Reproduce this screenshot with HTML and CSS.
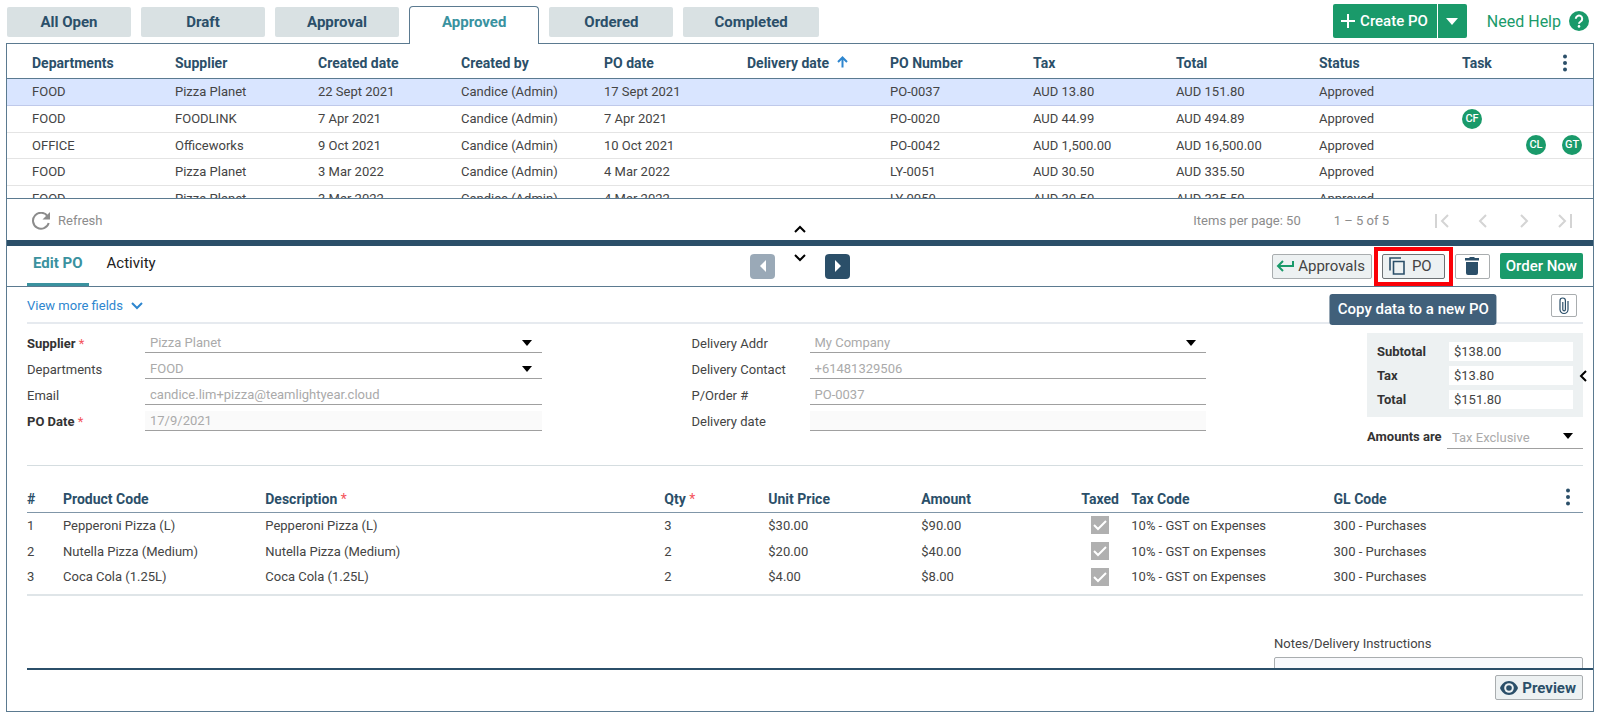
FILE: index.html
```html
<!DOCTYPE html>
<html lang="en">
<head>
    <meta charset="UTF-8">
    <meta name="viewport" content="width=device-width, initial-scale=1.0">
    <title>Purchase Orders</title>
    <link rel="stylesheet" href="styles.css">
</head>
<body>

    <!-- Top tabs and actions -->
    <header class="topbar">
        <nav class="tabs">
            <button type="button" class="tab">All Open</button>
            <button type="button" class="tab">Draft</button>
            <button type="button" class="tab">Approval</button>
            <button type="button" class="tab active">Approved</button>
            <button type="button" class="tab">Ordered</button>
            <button type="button" class="tab">Completed</button>
        </nav>
        <div class="top-actions">
            <div class="create-group">
                <button type="button" class="create">
                    <svg width="16" height="16" viewBox="0 0 16 16"><path d="M8 1v14M1 8h14" stroke="#fff" stroke-width="2" fill="none"/></svg>
                    Create PO
                </button>
                <button type="button" class="create-more" aria-label="More create options">
                    <svg width="12" height="7" viewBox="0 0 12 7"><path d="M0 0h12L6 7z" fill="#fff"/></svg>
                </button>
            </div>
            <a href="#" class="help">
                Need Help
                <svg width="20" height="20" viewBox="0 0 20 20"><circle cx="10" cy="10" r="10" fill="#1a9a6a"/><path d="M6.8 7.8a3.2 3.2 0 1 1 4.9 2.7C10.600 11.200 10 11.600 10 12.700" stroke="#fff" stroke-width="2" fill="none"/><circle cx="10" cy="15.400" r="1.300" fill="#fff"/></svg>
            </a>
        </div>
    </header>

    <main class="panel">

        <!-- Orders list -->
        <div class="orders-scroll">
            <table class="orders">
                <colgroup>
                    <col class="col-first"><col><col><col><col><col>
                    <col><col><col><col><col class="col-task">
                </colgroup>
                <thead>
                    <tr>
                        <th>Departments</th>
                        <th>Supplier</th>
                        <th>Created date</th>
                        <th>Created by</th>
                        <th>PO date</th>
                        <th>Delivery date <svg class="sort" width="11" height="12" viewBox="0 0 11 12"><path d="M5.500 11.500V1.500M1 6l4.500-4.500L10 6" stroke="#2e86cf" stroke-width="2" fill="none"/></svg></th>
                        <th>PO Number</th>
                        <th>Tax</th>
                        <th>Total</th>
                        <th>Status</th>
                        <th>
                            <div class="task-head">
                                Task
                                <button type="button" class="dots" aria-label="Columns"><svg width="4" height="18" viewBox="0 0 4 18"><circle cx="2" cy="2.500" r="2"/><circle cx="2" cy="9" r="2"/><circle cx="2" cy="15.500" r="2"/></svg></button>
                            </div>
                        </th>
                    </tr>
                </thead>
                <tbody>
                    <tr class="selected">
                        <td>FOOD</td><td>Pizza Planet</td><td>22 Sept 2021</td><td>Candice (Admin)</td><td>17 Sept 2021</td><td></td>
                        <td>PO-0037</td><td>AUD 13.80</td><td>AUD 151.80</td><td>Approved</td><td></td>
                    </tr>
                    <tr>
                        <td>FOOD</td><td>FOODLINK</td><td>7 Apr 2021</td><td>Candice (Admin)</td><td>7 Apr 2021</td><td></td>
                        <td>PO-0020</td><td>AUD 44.99</td><td>AUD 494.89</td><td>Approved</td>
                        <td><div class="badges"><span class="badge">CF</span></div></td>
                    </tr>
                    <tr>
                        <td>OFFICE</td><td>Officeworks</td><td>9 Oct 2021</td><td>Candice (Admin)</td><td>10 Oct 2021</td><td></td>
                        <td>PO-0042</td><td>AUD 1,500.00</td><td>AUD 16,500.00</td><td>Approved</td>
                        <td><div class="badges end"><span class="badge">CL</span><span class="badge">GT</span></div></td>
                    </tr>
                    <tr>
                        <td>FOOD</td><td>Pizza Planet</td><td>3 Mar 2022</td><td>Candice (Admin)</td><td>4 Mar 2022</td><td></td>
                        <td>LY-0051</td><td>AUD 30.50</td><td>AUD 335.50</td><td>Approved</td><td></td>
                    </tr>
                    <tr>
                        <td>FOOD</td><td>Pizza Planet</td><td>3 Mar 2022</td><td>Candice (Admin)</td><td>4 Mar 2022</td><td></td>
                        <td>LY-0050</td><td>AUD 30.50</td><td>AUD 335.50</td><td>Approved</td><td></td>
                    </tr>
                </tbody>
            </table>
        </div>

        <!-- Paginator -->
        <div class="pager">
            <button type="button" class="refresh">
                <svg width="18" height="18" viewBox="0 0 18 18"><path d="M15.600 4.200A8 8 0 1 0 16.700 11" stroke="#8c8c8c" stroke-width="2" fill="none"/><path d="M18 0v7.500h-7.500z" fill="#8c8c8c"/></svg>
                Refresh
            </button>
            <button type="button" class="collapse" aria-label="Collapse list">
                <svg width="12" height="8" viewBox="0 0 12 8"><path d="M1 7l5-5 5 5" stroke="#000" stroke-width="2" fill="none"/></svg>
            </button>
            <div class="pager-right">
                <span>Items per page: 50</span>
                <span>1 – 5 of 5</span>
                <div class="pager-buttons">
                    <button type="button" disabled aria-label="First page"><svg width="16" height="14" viewBox="0 0 16 14"><path d="M2 0v14M14 1L8 7l6 6"/></svg></button>
                    <button type="button" disabled aria-label="Previous page"><svg width="16" height="14" viewBox="0 0 16 14"><path d="M11 1L5 7l6 6"/></svg></button>
                    <button type="button" disabled aria-label="Next page"><svg width="16" height="14" viewBox="0 0 16 14"><path d="M5 1l6 6-6 6"/></svg></button>
                    <button type="button" disabled aria-label="Last page"><svg width="16" height="14" viewBox="0 0 16 14"><path d="M14 0v14M2 1l6 6-6 6"/></svg></button>
                </div>
            </div>
        </div>

        <!-- Order detail header -->
        <div class="detail-head">
            <nav class="detail-tabs">
                <button type="button" class="detail-tab active">Edit PO</button>
                <button type="button" class="detail-tab">Activity</button>
            </nav>
            <div class="stepper">
                <button type="button" class="step" disabled aria-label="Previous order"><svg width="6" height="12" viewBox="0 0 6 12"><path d="M6 0v12L0 6z" fill="#fff"/></svg></button>
                <button type="button" class="expand" aria-label="Expand list"><svg width="12" height="8" viewBox="0 0 12 8"><path d="M1 1l5 5 5-5" stroke="#000" stroke-width="2" fill="none"/></svg></button>
                <button type="button" class="step" aria-label="Next order"><svg width="6" height="12" viewBox="0 0 6 12"><path d="M0 0v12l6-6z" fill="#fff"/></svg></button>
            </div>
            <div class="detail-actions">
                <button type="button" class="btn">
                    <svg width="18" height="12" viewBox="0 0 18 12"><path d="M17 1v5H2M7 1L2 6l5 5" stroke="#1a9a6a" stroke-width="2" fill="none"/></svg>
                    Approvals
                </button>
                <span class="copy-wrap">
                    <button type="button" class="btn copy" aria-describedby="copy-tip">
                        <svg width="16" height="18" viewBox="0 0 16 18"><path d="M1 13.500V1h11M4.500 4.500H15V17H4.500z" stroke="#2b4f69" stroke-width="1.600" fill="none"/></svg>
                        PO
                    </button>
                    <span class="tooltip" id="copy-tip" role="tooltip">Copy data to a new PO</span>
                </span>
                <button type="button" class="btn trash" aria-label="Delete">
                    <svg width="14" height="18" viewBox="0 0 14 18"><path d="M1 5h12v11a2 2 0 0 1-2 2H3a2 2 0 0 1-2-2zM0 1h4l1-1h4l1 1h4v2.500H0z" fill="#2b4f69"/></svg>
                </button>
                <button type="button" class="order">Order Now</button>
            </div>
        </div>

        <!-- Order detail -->
        <div class="detail">
            <div class="more-row">
                <a href="#" class="more">
                    View more fields
                    <svg width="12" height="8" viewBox="0 0 12 8"><path d="M1 1l5 5 5-5" stroke="#2e86cf" stroke-width="2" fill="none"/></svg>
                </a>
                <button type="button" class="attach" aria-label="Attachments">
                    <svg width="10" height="18" viewBox="0 0 10 18"><path d="M9 4v8.500a4 4 0 0 1-8 0V3.700a2.700 2.700 0 0 1 5.400 0v8.800a1.300 1.300 0 0 1-2.600 0V5" stroke="#2b4f69" stroke-width="1.200" fill="none"/></svg>
                </button>
            </div>

            <form class="form">
                <div class="fields">
                    <label for="supplier" class="strong">Supplier <i>*</i></label>
                    <div class="select"><select id="supplier" disabled><option>Pizza Planet</option></select></div>
                    <label for="departments">Departments</label>
                    <div class="select"><select id="departments" disabled><option>FOOD</option></select></div>
                    <label for="email">Email</label>
                    <input type="text" id="email" value="candice.lim+pizza@teamlightyear.cloud" disabled>
                    <label for="podate" class="strong">PO Date <i>*</i></label>
                    <input type="text" id="podate" class="shaded" value="17/9/2021" disabled>
                </div>
                <div class="fields">
                    <label for="addr">Delivery Addr</label>
                    <div class="select"><select id="addr" disabled><option>My Company</option></select></div>
                    <label for="contact">Delivery Contact</label>
                    <input type="text" id="contact" value="+61481329506" disabled>
                    <label for="porder">P/Order #</label>
                    <input type="text" id="porder" value="PO-0037" disabled>
                    <label for="delivery">Delivery date</label>
                    <input type="text" id="delivery" class="shaded" value="" disabled>
                </div>
                <div class="totals">
                    <div class="totals-box">
                        <label for="subtotal">Subtotal</label>
                        <input type="text" id="subtotal" value="$138.00" readonly>
                        <label for="tax">Tax</label>
                        <input type="text" id="tax" value="$13.80" readonly>
                        <label for="total">Total</label>
                        <input type="text" id="total" value="$151.80" readonly>
                        <button type="button" class="side-toggle" aria-label="Show side panel"><svg width="8" height="12" viewBox="0 0 8 12"><path d="M7 1L2 6l5 5" stroke="#000" stroke-width="2" fill="none"/></svg></button>
                    </div>
                    <div class="amounts">
                        <label for="amounts">Amounts are</label>
                        <div class="select"><select id="amounts" disabled><option>Tax Exclusive</option></select></div>
                    </div>
                </div>
            </form>

            <table class="lines">
                <colgroup>
                    <col class="l-num"><col class="l-code"><col class="l-desc"><col class="l-qty"><col class="l-price">
                    <col class="l-amount"><col class="l-taxed"><col class="l-taxcode"><col>
                </colgroup>
                <thead>
                    <tr>
                        <th>#</th>
                        <th>Product Code</th>
                        <th>Description <i>*</i></th>
                        <th>Qty <i>*</i></th>
                        <th>Unit Price</th>
                        <th>Amount</th>
                        <th>Taxed</th>
                        <th>Tax Code</th>
                        <th>
                            <div class="gl-head">
                                GL Code
                                <button type="button" class="dots" aria-label="Line columns"><svg width="4" height="18" viewBox="0 0 4 18"><circle cx="2" cy="2.500" r="2"/><circle cx="2" cy="9" r="2"/><circle cx="2" cy="15.500" r="2"/></svg></button>
                            </div>
                        </th>
                    </tr>
                </thead>
                <tbody>
                    <tr>
                        <td>1</td><td>Pepperoni Pizza (L)</td><td>Pepperoni Pizza (L)</td><td>3</td><td>$30.00</td><td>$90.00</td>
                        <td><label class="check"><input type="checkbox" checked disabled aria-label="Taxed, line 1"><svg viewBox="0 0 18 18"><path d="M3 9l4 4 8-8"/></svg></label></td>
                        <td>10% - GST on Expenses</td><td>300 - Purchases</td>
                    </tr>
                    <tr>
                        <td>2</td><td>Nutella Pizza (Medium)</td><td>Nutella Pizza (Medium)</td><td>2</td><td>$20.00</td><td>$40.00</td>
                        <td><label class="check"><input type="checkbox" checked disabled aria-label="Taxed, line 2"><svg viewBox="0 0 18 18"><path d="M3 9l4 4 8-8"/></svg></label></td>
                        <td>10% - GST on Expenses</td><td>300 - Purchases</td>
                    </tr>
                    <tr>
                        <td>3</td><td>Coca Cola (1.25L)</td><td>Coca Cola (1.25L)</td><td>2</td><td>$4.00</td><td>$8.00</td>
                        <td><label class="check"><input type="checkbox" checked disabled aria-label="Taxed, line 3"><svg viewBox="0 0 18 18"><path d="M3 9l4 4 8-8"/></svg></label></td>
                        <td>10% - GST on Expenses</td><td>300 - Purchases</td>
                    </tr>
                </tbody>
            </table>

            <div class="notes">
                <label for="notes">Notes/Delivery Instructions</label>
                <textarea id="notes"></textarea>
            </div>
        </div>

        <!-- Bottom bar -->
        <footer class="bottom">
            <button type="button" class="btn preview">
                <svg width="18" height="14" viewBox="0 0 18 14"><path d="M9 0C5 0 1.500 2.800 0 7c1.500 4.200 5 7 9 7s7.500-2.800 9-7c-1.500-4.200-5-7-9-7z" fill="#2b4f69"/><circle cx="9" cy="7" r="4.800" fill="#edf1f2"/><circle cx="9" cy="7" r="2.800" fill="#2b4f69"/></svg>
                Preview
            </button>
        </footer>
    </main>

</body>
</html>
```

FILE: styles.css
```css
* {
    box-sizing: border-box;
}

body {
    margin: 0;
    padding: 4px 6px 6px 6px;
    height: 100vh;
    display: flex;
    flex-direction: column;
    overflow: hidden;
    background-color: #ffffff;
    color: #444444;
    font-family: Roboto, Arial, sans-serif;
    font-size: 13px;
}

button,
input,
select,
textarea {
    font-family: inherit;
    font-size: inherit;
    color: inherit;
    margin: 0;
    padding: 0;
}

button {
    border: none;
    background: none;
    cursor: pointer;
    display: inline-flex;
    align-items: center;
    justify-content: center;
}

svg {
    display: block;
    flex-shrink: 0;
}

i {
    color: #f4545c;
    font-style: normal;
    font-weight: 400;
}

/* Top bar */
.topbar {
    display: flex;
    justify-content: space-between;
    align-items: flex-start;
    padding-left: 1px;
    padding-right: 5px;
}

.tabs {
    display: flex;
    gap: 10px;
    padding-top: 2px;
    margin-bottom: -1px;
    position: relative;
    z-index: 1;
}

.tab {
    min-width: 124px;
    height: 30px;
    margin-top: 1px;
    padding: 0 31px;
    border-radius: 2px;
    background-color: #d9e1e3;
    color: #2b4f69;
    font-size: 15px;
    font-weight: 700;
}

.tab.active {
    height: 38px;
    margin-top: 0;
    padding: 0 32px 8px;
    border: 1px solid #5b7a90;
    border-bottom: none;
    border-radius: 4px 4px 0 0;
    background-color: #ffffff;
    color: #3a929f;
}

.top-actions {
    display: flex;
    align-items: center;
    gap: 20px;
}

.create-group {
    display: flex;
    gap: 1px;
}

.create,
.create-more,
.order {
    background-color: #1a9a6a;
    color: #ffffff;
    font-size: 15px;
    font-weight: 500;
}

.create {
    height: 34px;
    padding: 0 9px 0 7px;
    gap: 4px;
    border-radius: 2px 0 0 2px;
}

.create-more {
    width: 29px;
    border-radius: 0 2px 2px 0;
}

.help {
    display: flex;
    align-items: center;
    gap: 8px;
    color: #1a9a6a;
    font-size: 16px;
    text-decoration: none;
}

/* Main panel */
.panel {
    flex: 1;
    min-height: 0;
    display: flex;
    flex-direction: column;
    border: 1px solid #5b7a90;
}

/* Orders list */
.orders-scroll {
    height: 155px;
    overflow: hidden;
    flex-shrink: 0;
    border-bottom: 1px solid #5b7a90;
}

table {
    width: 100%;
    table-layout: fixed;
    border-collapse: collapse;
}

th,
td {
    padding: 0;
    text-align: left;
    white-space: nowrap;
}

th {
    color: #2b4f69;
    font-size: 14px;
    font-weight: 700;
}

.col-first {
    width: 168px;
}

.col-task {
    width: 131px;
}

.orders th {
    height: 34px;
    padding-top: 4px;
    border-bottom: 1px solid #5b7a90;
}

.orders td {
    height: 27px;
    border-bottom: 1px solid #e4e4e4;
}

.orders tbody tr:nth-child(3n) td {
    height: 26px;
}

.orders th:first-child,
.orders td:first-child {
    padding-left: 25px;
}

.orders .selected td {
    background-color: #d9e5ff;
    border-bottom-color: #bfc9ea;
}

.sort {
    display: inline-block;
    margin-left: 4px;
}

.task-head,
.gl-head {
    display: flex;
    align-items: center;
    justify-content: space-between;
}

.task-head {
    padding-right: 26px;
}

.dots svg {
    fill: #2b4f69;
}

.badges {
    display: flex;
    gap: 16px;
    padding-right: 11px;
}

.badges.end {
    justify-content: flex-end;
}

.badge {
    width: 20px;
    height: 20px;
    border-radius: 50%;
    background-color: #1a9a6a;
    color: #ffffff;
    font-size: 11px;
    font-weight: 500;
    line-height: 20px;
    text-align: center;
}

/* Paginator */
.pager {
    display: grid;
    grid-template-columns: 1fr auto 1fr;
    align-items: center;
    height: 41px;
    flex-shrink: 0;
    padding: 2px 20px 0;
    color: #8c8c8c;
}

.refresh {
    justify-self: start;
    gap: 8px;
    margin-left: 5px;
}

.collapse {
    align-self: end;
    padding-bottom: 7px;
}

.pager-right {
    display: flex;
    justify-content: flex-end;
    align-items: center;
    gap: 33px;
}

.pager-buttons {
    display: flex;
    gap: 25px;
    margin-left: 12px;
}

.pager-buttons svg {
    fill: none;
    stroke: #d4d4d4;
    stroke-width: 2;
}

/* Detail header */
.detail-head {
    display: grid;
    grid-template-columns: 1fr auto 1fr;
    align-items: center;
    height: 47px;
    flex-shrink: 0;
    padding: 0 10px;
    border-top: 6px solid #2b4f69;
    border-bottom: 1px solid #5b7a90;
}

.detail-tabs {
    display: flex;
    align-self: stretch;
    gap: 12px;
    padding-left: 10px;
}

.detail-tab {
    padding: 0 6px 4px;
    border-bottom: 3px solid transparent;
    color: #222222;
    font-size: 15px;
}

.detail-tab.active {
    border-bottom-color: #3a929f;
    color: #3a929f;
    font-weight: 700;
}

.stepper {
    display: flex;
    gap: 19px;
}

.step {
    width: 25px;
    height: 25px;
    border-radius: 4px;
    background-color: #2b4f69;
}

.step:disabled {
    background-color: #9aa9b7;
}

.expand {
    align-self: flex-start;
}

.detail-actions {
    display: flex;
    justify-content: flex-end;
    align-items: center;
    gap: 10px;
}

.btn {
    height: 25px;
    padding: 0 6px 0 3px;
    gap: 4px;
    border: 1px solid #a9adaf;
    border-radius: 2px;
    background-color: #edf1f2;
    font-size: 15px;
}

.copy-wrap {
    position: relative;
    display: flex;
}

/* Highlight frame around the copy button */
.copy-wrap::before {
    content: "";
    position: absolute;
    inset: -7px -8px;
    border: 4px solid #fb0007;
    pointer-events: none;
}

.copy {
    padding: 0 12px 0 6px;
    gap: 7px;
    border-color: #6d7275;
}

.tooltip {
    position: absolute;
    top: 40px;
    left: 50%;
    transform: translateX(-50%);
    z-index: 2;
    padding: 0 8px;
    border-radius: 3px;
    background-color: #41607a;
    color: #ffffff;
    font-size: 15px;
    font-weight: 500;
    line-height: 31px;
    white-space: nowrap;
}

.trash {
    width: 35px;
    padding: 0;
    background-color: #ffffff;
}

.order {
    height: 26px;
    padding: 0 6px;
    border-radius: 2px;
}

/* Detail body */
.detail {
    flex: 1;
    min-height: 0;
    overflow: hidden;
    padding: 0 10px 0 20px;
}

.more-row {
    display: flex;
    justify-content: space-between;
    align-items: center;
    height: 37px;
    padding-top: 2px;
    padding-right: 6px;
    border-bottom: 2px solid #e6eaef;
}

.more {
    display: flex;
    align-items: center;
    gap: 8px;
    color: #2e86cf;
    text-decoration: none;
}

.attach {
    width: 26px;
    height: 23px;
    border: 1px solid #a9adaf;
    border-radius: 2px;
}

.form {
    display: grid;
    grid-template-columns: 1fr 1fr 227px;
    column-gap: 150px;
    height: 142px;
    padding-top: 9px;
    border-bottom: 1px solid #d5dde0;
}

.fields {
    display: grid;
    grid-template-columns: 118px 1fr;
    grid-auto-rows: 20px;
    row-gap: 6px;
    align-items: center;
}

.strong,
.totals label {
    color: #333333;
    font-weight: 700;
}

.fields input,
.select select {
    width: 100%;
    height: 20px;
    padding: 0 5px 1px;
    border: none;
    border-bottom: 1px solid #a0a0a0;
    border-radius: 0;
    background-color: #ffffff;
    color: #aaaaaa;
    opacity: 1;
}

.fields .shaded {
    background-color: #fafafa;
}

.select {
    display: grid;
    align-items: center;
}

.select select {
    grid-area: 1 / 1;
    appearance: none;
}

.select::after {
    content: "";
    grid-area: 1 / 1;
    justify-self: end;
    margin-right: 10px;
    border: 5px solid transparent;
    border-top: 6px solid #000000;
    border-bottom: none;
}

.totals {
    margin-left: 11px;
}

.totals-box {
    position: relative;
    display: grid;
    grid-template-columns: 72px 1fr;
    gap: 5px 0;
    align-items: center;
    padding: 9px 10px 8px;
    background-color: #edf1f2;
}

.totals-box input {
    width: 100%;
    height: 19px;
    padding: 0 5px 1px;
    border: none;
    background-color: #ffffff;
}

.side-toggle {
    position: absolute;
    right: -4px;
    top: 37px;
}

.amounts {
    display: grid;
    grid-template-columns: 80px 1fr;
    align-items: center;
    margin-top: 6px;
}

.amounts .select select {
    height: 26px;
    padding-top: 4px;
}

/* Order lines */
.lines th {
    height: 46px;
    padding-top: 20px;
    border-bottom: 1px solid #8096a8;
}

.lines td {
    height: 26px;
}

.lines tbody {
    border-bottom: 2px solid #dfe5e8;
}

.lines tbody tr:last-child td {
    height: 31px;
    padding-bottom: 5px;
}

.l-num {
    width: 36px;
}

.l-code {
    width: 13%;
}

.l-desc {
    width: 399px;
}

.l-qty {
    width: 104px;
}

.l-price {
    width: 153px;
}

.l-amount {
    width: 160px;
}

.l-taxed {
    width: 50px;
}

.l-taxcode {
    width: 13%;
}

.gl-head {
    padding-right: 13px;
}

.gl-head .dots {
    padding-bottom: 4px;
}

.check {
    display: grid;
    width: 18px;
    margin-left: 10px;
}

.check input,
.check svg {
    grid-area: 1 / 1;
    width: 18px;
    height: 18px;
}

.check input {
    appearance: none;
    background-color: #b0b0b0;
}

.check svg {
    fill: none;
    stroke: #ffffff;
    stroke-width: 2;
}

/* Notes */
.notes {
    width: 309px;
    margin-top: 40px;
    margin-left: auto;
}

.notes label {
    display: block;
    line-height: 16px;
    margin-bottom: 5px;
}

.notes textarea {
    display: block;
    width: 100%;
    height: 60px;
    border: 1px solid #a9adaf;
    border-radius: 2px;
    background-color: #f8f9fc;
    resize: none;
}

/* Bottom bar */
.bottom {
    display: flex;
    justify-content: flex-end;
    align-items: flex-start;
    height: 43px;
    flex-shrink: 0;
    margin-left: 20px;
    padding: 5px 10px 0 0;
    border-top: 2px solid #2b4f69;
}

.preview {
    padding: 0 6px 0 4px;
    color: #2b4f69;
    font-weight: 700;
}
```
